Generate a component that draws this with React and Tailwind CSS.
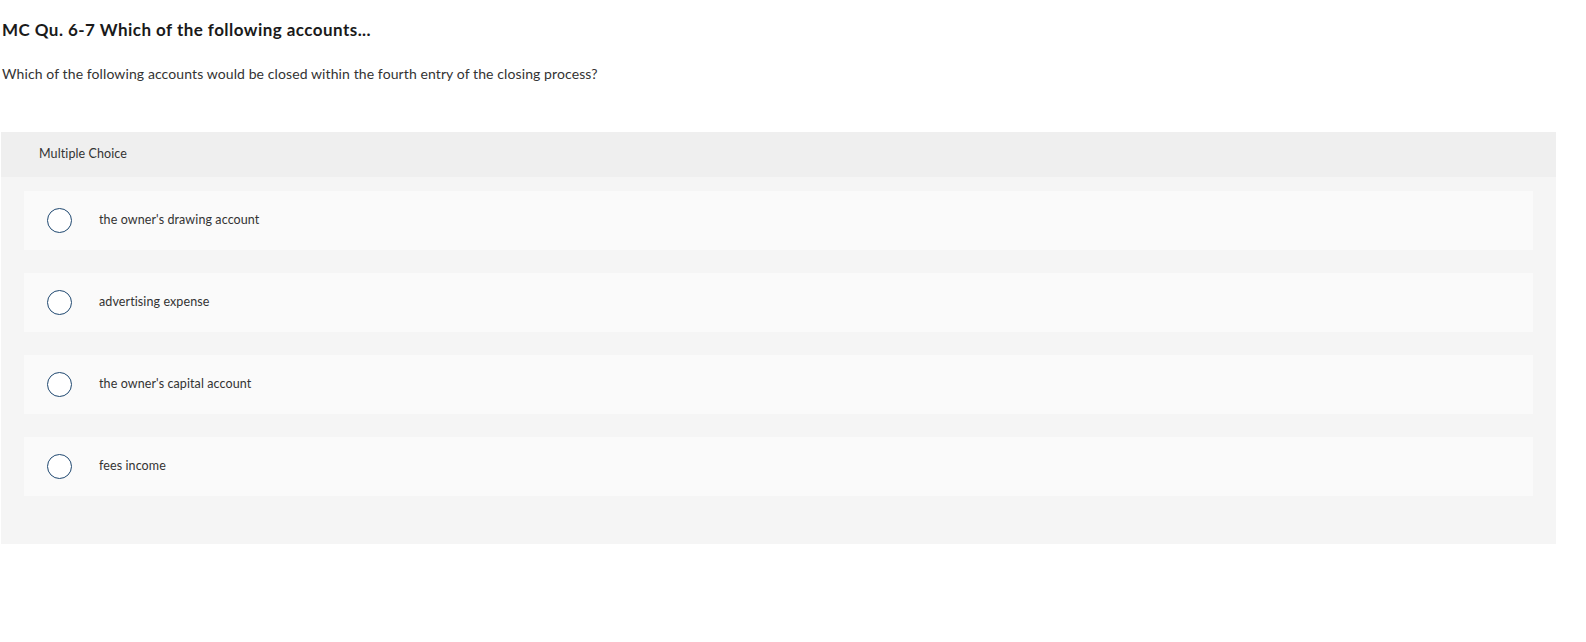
import React from 'react'

const options = [
  "the owner's drawing account",
  'advertising expense',
  "the owner's capital account",
  'fees income',
]

const font = { fontFamily: 'Lato, "Open Sans", sans-serif' }

export default function App() {
  return (
    <div className="w-[1586px] h-[642px] bg-white text-[#222]" style={font}>
      <h1 className="pl-[2px] pt-[19px] text-[17px] leading-[22px] font-bold tracking-[0.45px] text-[#1a1a1a]">
        MC Qu. 6-7 Which of the following accounts...
      </h1>
      <p className="pl-[2px] mt-[23px] text-[14px] leading-[20px] tracking-[0.1px] text-[#333]">
        Which of the following accounts would be closed within the fourth entry of the closing process?
      </p>
      <div className="ml-[1px] mt-[48px] w-[1555px] h-[412px] bg-[#f5f5f5]">
        <div className="h-[45px] bg-[#efefef] flex items-center pl-[38px] text-[12.5px] tracking-[0.1px] text-[#333]">
          Multiple Choice
        </div>
        <div className="flex flex-col gap-[23px] pt-[14px] px-[23px]">
          {options.map((o) => (
            <div key={o} className="h-[59px] bg-[#fafafa] flex items-center">
              <span className="ml-[23px] w-[25px] h-[25px] rounded-full border-[1.5px] border-[#1f4870] bg-white shrink-0" />
              <span className="ml-[27px] text-[12.5px] tracking-[0.1px] text-[#333]">{o}</span>
            </div>
          ))}
        </div>
      </div>
    </div>
  )
}
